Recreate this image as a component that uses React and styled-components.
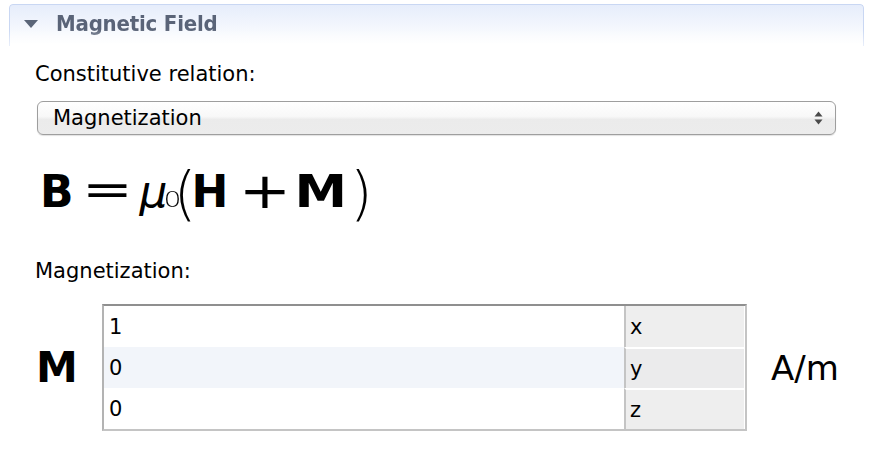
import React from "react";
import styled, { createGlobalStyle } from "styled-components";

const Global = createGlobalStyle`
  html, body { margin: 0; padding: 0; background: #ffffff; }
  body { font-family: "DejaVu Sans", "Liberation Sans", sans-serif; color: #000; }
`;

const Page = styled.div`
  width: 876px;
  height: 462px;
  overflow: hidden;
  padding: 4px 12px 0 9px;
  box-sizing: border-box;
`;

const Section = styled.section`
  display: flex;
  flex-direction: column;
`;

const Header = styled.div`
  height: 42px;
  display: flex;
  align-items: center;
  gap: 18px;
  padding: 0 0 4px 14px;
  box-sizing: border-box;
  border: 1px solid #c9d7f3;
  border-bottom: none;
  border-radius: 4px 4px 0 0;
  background: linear-gradient(#e6edfb, #ffffff);
  -webkit-mask-image: linear-gradient(#000 60%, rgba(0, 0, 0, 0.4));
`;

const Triangle = styled.span`
  width: 0;
  height: 0;
  border-left: 7px solid transparent;
  border-right: 7px solid transparent;
  border-top: 8px solid #5a6578;
`;

const Title = styled.h2`
  margin: 0;
  font-family: "DejaVu Sans Condensed", "DejaVu Sans", sans-serif;
  font-weight: bold;
  font-size: 22px;
  color: #5a6478;
  letter-spacing: -0.2px;
`;

const Body = styled.div`
  display: flex;
  flex-direction: column;
  padding: 16px 0 0 26px;
`;

const Label = styled.div`
  font-size: 21px;
  line-height: 25px;
  margin-top: ${(p) => p.$mt || 0}px;
  margin-bottom: ${(p) => p.$mb || 0}px;
`;

const Select = styled.div`
  margin-left: 2px;
  width: 799px;
  height: 34px;
  box-sizing: border-box;
  border: 1px solid #9e9e9e;
  border-radius: 6px;
  background: linear-gradient(#ffffff 0%, #f8f8f8 45%, #ebebeb 55%, #ececec 100%);
  box-shadow: 0 1px 1px rgba(0, 0, 0, 0.12);
  display: flex;
  align-items: center;
  justify-content: space-between;
  padding: 0 12px 0 15px;
  font-size: 21px;
`;

const Arrows = styled.svg`
  width: 9px;
  height: 16px;
`;

const Equation = styled.div`
  display: flex;
  align-items: baseline;
  height: 62px;
  margin: 22px 0 0 5px;
  line-height: 60px;
`;

const Glyph = styled.span`
  display: inline-block;
  margin-left: ${(p) => p.$ml || 0}px;
  font-family: "DejaVu Sans", sans-serif;
  font-size: ${(p) => p.$size || 44}px;
  font-weight: ${(p) => (p.$bold ? "bold" : p.$light ? 200 : "normal")};
  font-style: ${(p) => (p.$italic ? "italic" : "normal")};
  letter-spacing: ${(p) => p.$ls || 0}px;
  transform: translateY(${(p) => p.$dy || 0}px) scaleX(${(p) => p.$sx || 1});
  white-space: nowrap;
`;

const FieldRow = styled.div`
  display: flex;
  align-items: center;
  margin-top: 20px;
`;

const Symbol = styled.div`
  width: 67px;
  padding-left: 1px;
  box-sizing: border-box;
  font-family: "DejaVu Sans", sans-serif;
  font-weight: bold;
  font-size: 42px;
`;

const Table = styled.div`
  width: 645px;
  box-sizing: border-box;
  display: grid;
  grid-template-columns: 1fr 121px;
  border-top: 2px solid #8f8f8f;
  border-left: 2px solid #b3b3b3;
  border-right: 2px solid #c4c4c4;
  border-bottom: 2px solid #c4c4c4;
`;

const Cell = styled.div`
  height: 41px;
  display: flex;
  align-items: center;
  padding-left: 5px;
  font-size: 21px;
  box-sizing: border-box;
  background: ${(p) => (p.$alt ? "#f2f5fa" : "#ffffff")};
`;

const UnitCell = styled.div`
  height: 41px;
  display: flex;
  align-items: center;
  padding-left: 4px;
  font-size: 21px;
  box-sizing: border-box;
  border-left: 2px solid #c4c4c4;
  border-right: 1px solid #ffffff;
  background: ${(p) => (p.$alt ? "#ebebec" : "#eeeeee")};
  border-top: ${(p) => (p.$first ? "none" : "2px solid #ffffff")};
`;

const Unit = styled.div`
  margin-left: 24px;
  font-family: "DejaVu Sans", sans-serif;
  font-size: 34px;
`;

const rows = [
  ["1", "x"],
  ["0", "y"],
  ["0", "z"],
];

export default function App() {
  return (
    <>
      <Global />
      <Page>
        <Section>
          <Header>
            <Triangle />
            <Title>Magnetic Field</Title>
          </Header>
          <Body>
            <Label $mb={14}>Constitutive relation:</Label>
            <Select>
              <span>Magnetization</span>
              <Arrows viewBox="0 0 9 16">
                <path d="M4.5 1.5 L8.5 6.5 L0.5 6.5 Z" fill="#4a4a4a" />
                <path d="M4.5 14.5 L8.5 9.5 L0.5 9.5 Z" fill="#4a4a4a" />
              </Arrows>
            </Select>
            <Equation>
              <Glyph $bold>B</Glyph>
              <Glyph $ml={15} $sx={1.38} $dy={-2}>=</Glyph>
              <Glyph $ml={14} $italic $light $ls={-2}>μ</Glyph>
              <Glyph $size={21} $light $sx={1.35} $ls={-5}>0</Glyph>
              <Glyph $size={58} $light $dy={7} $ls={-5}>(</Glyph>
              <Glyph $bold>H</Glyph>
              <Glyph $ml={16} $size={50} $sx={1.25} $dy={1}>+</Glyph>
              <Glyph $ml={13} $bold $sx={1.2}>M</Glyph>
              <Glyph $ml={7} $size={58} $light $dy={7}>)</Glyph>
            </Equation>
            <Label $mt={40}>Magnetization:</Label>
            <FieldRow>
              <Symbol>M</Symbol>
              <Table>
                {rows.map(([v, u], i) => (
                  <React.Fragment key={u}>
                    <Cell $alt={i === 1}>{v}</Cell>
                    <UnitCell $alt={i === 1} $first={i === 0}>
                      {u}
                    </UnitCell>
                  </React.Fragment>
                ))}
              </Table>
              <Unit>A/m</Unit>
            </FieldRow>
          </Body>
        </Section>
      </Page>
    </>
  );
}
